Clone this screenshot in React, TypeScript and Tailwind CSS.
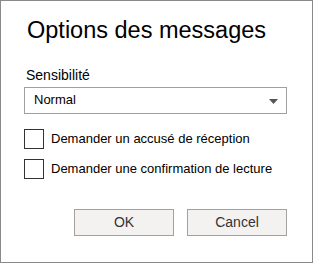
export default function App() {
  return (
    <div className="w-[313px] h-[263px] bg-white border border-[#8a8a8a] font-['Liberation_Sans',Arial,sans-serif] text-black flex flex-col">
      <h1 className="text-[23.5px] leading-none mt-[18px] ml-[26px]">Options des messages</h1>

      <div className="mt-[25px] ml-[23px] w-[263px] flex flex-col">
        <label className="text-[14px] leading-none ml-[2px]">Sensibilité</label>
        <div className="mt-[5px] h-[27px] border border-[#a0a0a0] flex items-center justify-between pl-[9px] pr-[8px]">
          <span className="text-[13px]">Normal</span>
          <svg width="9" height="5" viewBox="0 0 9 5" className="mt-[2px]">
            <path d="M0 0 L9 0 L4.5 5 Z" fill="#555" />
          </svg>
        </div>

        <div className="mt-[15px] flex flex-col gap-[10px]">
          <div className="flex items-center gap-[7px]">
            <div className="w-[20px] h-[20px] border border-[#333]" />
            <span className="text-[13px]">Demander un accusé de réception</span>
          </div>
          <div className="flex items-center gap-[7px]">
            <div className="w-[20px] h-[20px] border border-[#333]" />
            <span className="text-[13px]">Demander une confirmation de lecture</span>
          </div>
        </div>

        <div className="mt-[30px] flex justify-end gap-[13px]">
          <button className="w-[100px] h-[27px] bg-[#f3f2f1] border border-[#a3a09d] text-[14px] text-[#333]">OK</button>
          <button className="w-[100px] h-[27px] bg-[#f3f2f1] border border-[#a3a09d] text-[14px] text-[#333]">Cancel</button>
        </div>
      </div>
    </div>
  );
}
